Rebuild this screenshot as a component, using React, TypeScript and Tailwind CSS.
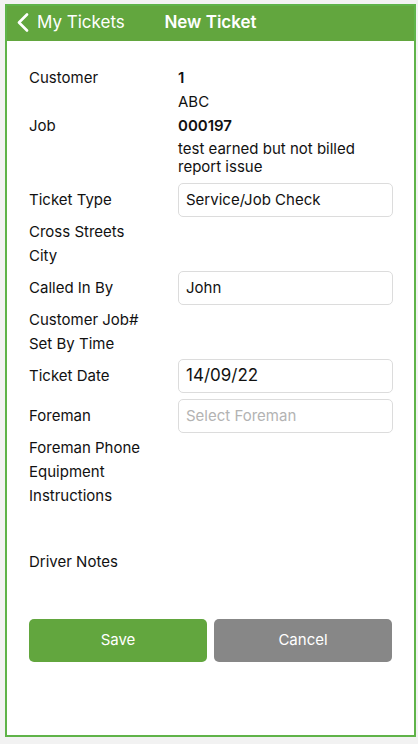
import { ReactNode } from "react"

function TextRow({ label, children, className = "" }: { label?: string; children?: ReactNode; className?: string }) {
  return (
    <div className={`flex h-6 items-center ${className}`}>
      <div className="w-[149px] shrink-0">{label}</div>
      <div className="flex-1">{children}</div>
    </div>
  )
}

function InputRow({
  label,
  value,
  placeholder,
  large,
  className = "",
}: {
  label: string
  value?: string
  placeholder?: string
  large?: boolean
  className?: string
}) {
  return (
    <div className={`flex items-center ${className}`}>
      <div className="w-[149px] shrink-0">{label}</div>
      <div className="flex h-[34px] w-[215px] items-center rounded-[5px] border border-[#dcdcdc] bg-white px-[7px]">
        {value ? (
          <span className={large ? "text-[17px]" : "text-[15px]"}>{value}</span>
        ) : (
          <span className="text-[15px] text-[#b3b3b3]">{placeholder}</span>
        )}
      </div>
    </div>
  )
}

export default function App() {
  return (
    <div
      className="h-[744px] w-[418px] bg-[#f2f2f2] pl-[5px] pr-[2px] pt-[4px] text-[15px] text-[#111]"
      style={{ fontFamily: "Inter, 'Liberation Sans', sans-serif" }}
    >
      <div className="flex h-[733px] flex-col border-2 border-[#5fb349] bg-white">
        <header className="relative flex h-[35px] items-center bg-[#62a63e] pb-[2px] text-white">
          <div className="flex items-center pl-[10px]">
            <svg width="12" height="19" viewBox="0 0 12 19" fill="none">
              <path d="M10 1.5 2 9.5l8 8" stroke="white" strokeWidth="2.6" strokeLinecap="round" strokeLinejoin="round" />
            </svg>
            <span className="ml-[8px] text-[17px]">My Tickets</span>
          </div>
          <div className="pointer-events-none absolute left-0 right-0 top-0 flex h-full items-center justify-center pb-[2px]">
            <span className="text-[17px] font-semibold">New Ticket</span>
          </div>
        </header>

        <div className="flex flex-1 flex-col pl-[22px] pr-[21px] pt-[25px]">
          <TextRow label="Customer">
            <span className="font-semibold">1</span>
          </TextRow>
          <TextRow>ABC</TextRow>
          <TextRow label="Job">
            <span className="font-semibold">000197</span>
          </TextRow>
          <div className="mt-[2px] flex">
            <div className="w-[149px] shrink-0" />
            <div className="flex-1 leading-[18px]">
              test earned but not billed
              <br />
              report issue
            </div>
          </div>
          <InputRow label="Ticket Type" value="Service/Job Check" className="mt-[7px]" />
          <TextRow label="Cross Streets" className="mt-[3px]" />
          <TextRow label="City" />
          <InputRow label="Called In By" value="John" className="mt-[3px]" />
          <TextRow label="Customer Job#" className="mt-[3px]" />
          <TextRow label="Set By Time" />
          <InputRow label="Ticket Date" value="14/09/22" large className="mt-[3px]" />
          <InputRow label="Foreman" placeholder="Select Foreman" className="mt-[6px]" />
          <TextRow label="Foreman Phone" className="mt-[3px]" />
          <TextRow label="Equipment" />
          <TextRow label="Instructions" />
          <TextRow label="Driver Notes" className="mt-[42px]" />

          <div className="mt-[45px] flex gap-[7px]">
            <button className="flex h-[43px] w-[178px] items-center justify-center rounded-[5px] bg-[#62a63e] text-white">
              Save
            </button>
            <button className="flex h-[43px] w-[178px] items-center justify-center rounded-[5px] bg-[#878787] text-white">
              Cancel
            </button>
          </div>
        </div>
      </div>
    </div>
  )
}
